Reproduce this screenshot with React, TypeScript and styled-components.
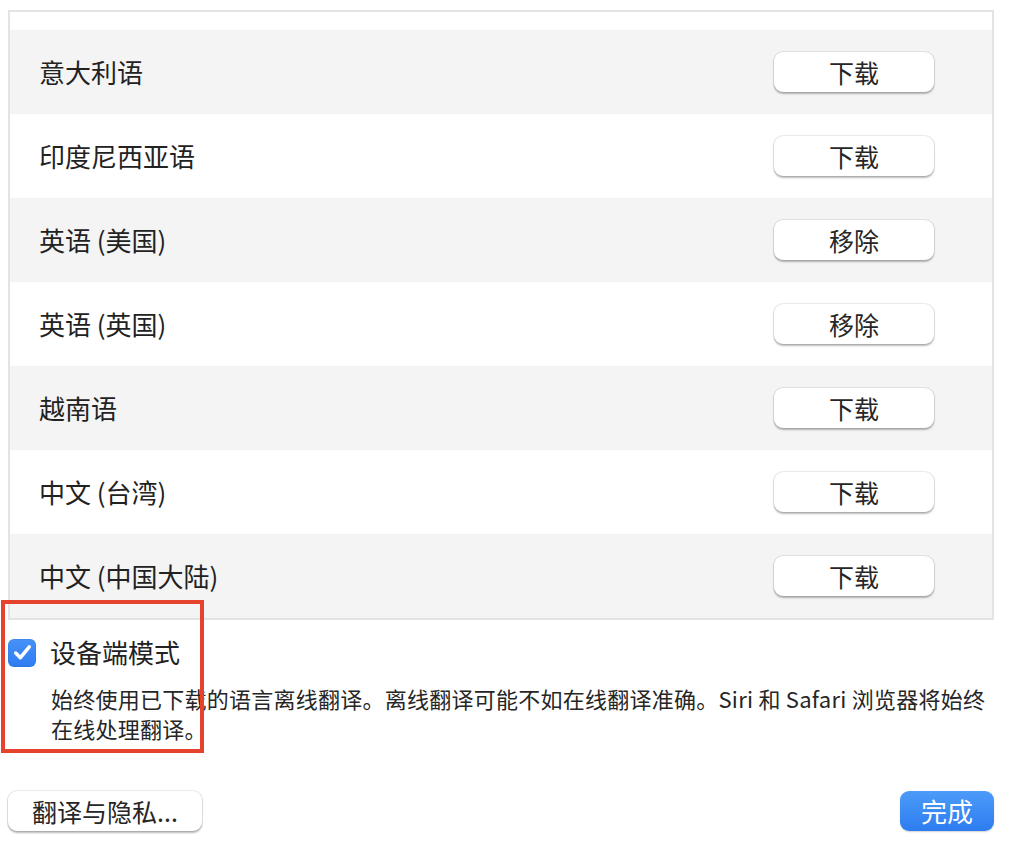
import React from 'react'
import styled, { createGlobalStyle } from 'styled-components'

const FONT = `'Noto Sans CJK SC', 'Noto Sans', 'Liberation Sans', sans-serif`

const GlobalStyle = createGlobalStyle`
  html, body {
    margin: 0;
    padding: 0;
    background: #ffffff;
    font-family: ${FONT};
    color: #222222;
  }
`

type Lang = { name: string; action: string }

const languages: Lang[] = [
	{ name: '意大利语', action: '下载' },
	{ name: '印度尼西亚语', action: '下载' },
	{ name: '英语 (美国)', action: '移除' },
	{ name: '英语 (英国)', action: '移除' },
	{ name: '越南语', action: '下载' },
	{ name: '中文 (台湾)', action: '下载' },
	{ name: '中文 (中国大陆)', action: '下载' },
]

const App = () => {
	return (
		<>
			<GlobalStyle />
			<Page>
				<LangList>
					<CutRow />
					{languages.map((lang, i) => (
						<Row key={lang.name} $shaded={i % 2 === 0}>
							<RowLabel>{lang.name}</RowLabel>
							<RowButton>{lang.action}</RowButton>
						</Row>
					))}
				</LangList>

				<Option>
					<CheckRow>
						<CheckBox>
							<svg width="25" height="25" viewBox="0 0 24 24">
								<path d="M5.5 12.5 L10 17 L18.5 6.5" fill="none" stroke="#fff" strokeWidth="3.4" strokeLinecap="round" strokeLinejoin="round" />
							</svg>
						</CheckBox>
						<CheckLabel>设备端模式</CheckLabel>
					</CheckRow>
					<Description>
						始终使用已下载的语言离线翻译。离线翻译可能不如在线翻译准确。Siri 和 Safari 浏览器将始终
						<br />
						在线处理翻译。
					</Description>
				</Option>

				<Footer>
					<PushButton $wide>翻译与隐私...</PushButton>
					<PrimaryButton>完成</PrimaryButton>
				</Footer>

				<Highlight />
			</Page>
		</>
	)
}

const Page = styled.div`
  position: relative;
  width: 986px;
  padding: 10px 22px 28px 8px;
`
const LangList = styled.div`
  border: 2px solid #e3e3e3;
  display: flex;
  flex-direction: column;
`
const CutRow = styled.div`
  height: 18px;
  background: #ffffff;
`
const Row = styled.div<{ $shaded: boolean }>`
  height: 84px;
  display: flex;
  align-items: center;
  justify-content: space-between;
  padding: 0 58px 0 29px;
  background: ${p => (p.$shaded ? '#f4f4f4' : '#ffffff')};
`
const RowLabel = styled.span`
  font-size: 26px;
  line-height: 30px;
  color: #222222;
`
const PushButton = styled.button<{ $wide?: boolean }>`
  height: 40px;
  width: ${p => (p.$wide ? '194px' : '160px')};
  border: none;
  border-radius: 9px;
  background: #ffffff;
  font-family: ${FONT};
  font-size: 25px;
  line-height: 40px;
  color: #262626;
  padding: 0;
  box-shadow: 0 0 0 1px rgba(0, 0, 0, 0.07), 0 1.5px 2px rgba(0, 0, 0, 0.28);
`
const RowButton = styled(PushButton)``

const Option = styled.div`
  margin-top: 18px;
`
const CheckRow = styled.div`
  display: flex;
  align-items: center;
  gap: 14px;
`
const CheckBox = styled.span`
  flex: 0 0 28px;
  width: 28px;
  height: 28px;
  border-radius: 6px;
  background: linear-gradient(#4592f8, #2f7cf2);
  display: flex;
  align-items: center;
  justify-content: center;
  box-shadow: inset 0 0 0 0.5px rgba(0, 0, 0, 0.1);
`
const CheckLabel = styled.span`
  font-size: 26px;
  line-height: 30px;
  color: #222222;
  margin-top: -1px;
`
const Description = styled.p`
  margin: 16px 0 0 43px;
  font-size: 22px;
  line-height: 30px;
  letter-spacing: 0.25px;
  color: #262626;
  white-space: nowrap;
`
const Footer = styled.div`
  margin-top: 48px;
  display: flex;
  justify-content: space-between;
  align-items: center;
`
const PrimaryButton = styled.button`
  height: 40px;
  width: 94px;
  border: none;
  border-radius: 9px;
  background: linear-gradient(#4c9bf9, #2d7cf0);
  color: #ffffff;
  font-family: ${FONT};
  font-size: 26px;
  line-height: 40px;
  padding: 0;
  box-shadow: 0 1px 1.5px rgba(0, 0, 0, 0.18);
`
const Highlight = styled.div`
  position: absolute;
  left: 1px;
  top: 600px;
  width: 195px;
  height: 145px;
  border: 4px solid #e5432e;
  pointer-events: none;
`

export default App
